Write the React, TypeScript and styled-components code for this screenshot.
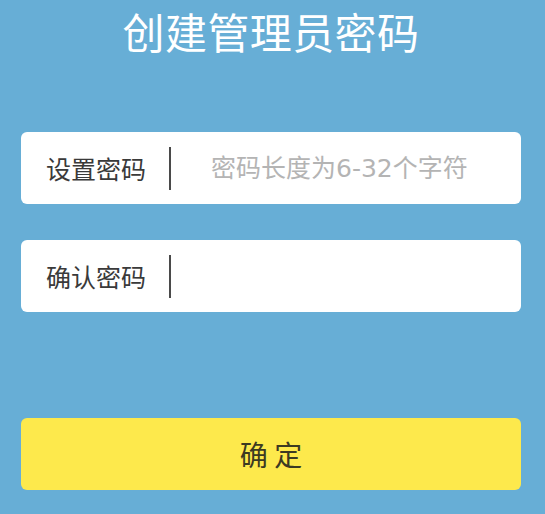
import React from 'react';
import styled, { createGlobalStyle } from 'styled-components';

const GlobalStyle = createGlobalStyle`
  html, body {
    margin: 0;
    padding: 0;
    background: #67aed6;
  }
  body {
    font-family: "Noto Sans CJK SC", "Noto Sans", sans-serif;
  }
`;

const Page = styled.div`
  width: 545px;
  height: 514px;
  box-sizing: border-box;
  padding: 0 24px 0 21px;
  display: flex;
  flex-direction: column;
  background: #67aed6;
`;

const Title = styled.h1`
  margin: 0;
  height: 61px;
  line-height: 61px;
  font-size: 42px;
  font-weight: 400;
  color: #ffffff;
  text-align: center;
  letter-spacing: 0.4px;
`;

const Form = styled.div`
  margin-top: 71px;
  display: flex;
  flex-direction: column;
  gap: 36px;
`;

const Field = styled.div`
  height: 72px;
  background: #ffffff;
  border-radius: 6px;
  display: flex;
  align-items: center;
  padding-left: 25px;
`;

const Label = styled.span`
  width: 101px;
  font-size: 25px;
  color: #3a3a3a;
  white-space: nowrap;
`;

const Divider = styled.span`
  width: 2px;
  height: 43px;
  margin-left: 22px;
  background: #4a4a4a;
`;

const Input = styled.input`
  flex: 1;
  min-width: 0;
  margin-left: 40px;
  margin-right: 20px;
  border: none;
  outline: none;
  background: transparent;
  font-family: "DejaVu Sans", "Noto Sans CJK SC", sans-serif;
  font-size: 25px;
  color: #333333;
  padding: 0;

  &::placeholder {
    color: #b4b4b4;
  }
`;

const Submit = styled.button`
  margin-top: 106px;
  height: 72px;
  border: none;
  border-radius: 6px;
  background: #fde94c;
  font-family: "Noto Sans CJK SC", "Noto Sans", sans-serif;
  font-size: 28px;
  color: #3c3a22;
  cursor: pointer;
`;

const fields = [
  { label: '设置密码', placeholder: '密码长度为6-32个字符' },
  { label: '确认密码', placeholder: '' },
];

const App = () => (
  <>
    <GlobalStyle />
    <Page>
      <Title>创建管理员密码</Title>
      <Form>
        {fields.map((f) => (
          <Field key={f.label}>
            <Label>{f.label}</Label>
            <Divider />
            <Input type="password" placeholder={f.placeholder} />
          </Field>
        ))}
      </Form>
      <Submit>确 定</Submit>
    </Page>
  </>
);

export default App;
